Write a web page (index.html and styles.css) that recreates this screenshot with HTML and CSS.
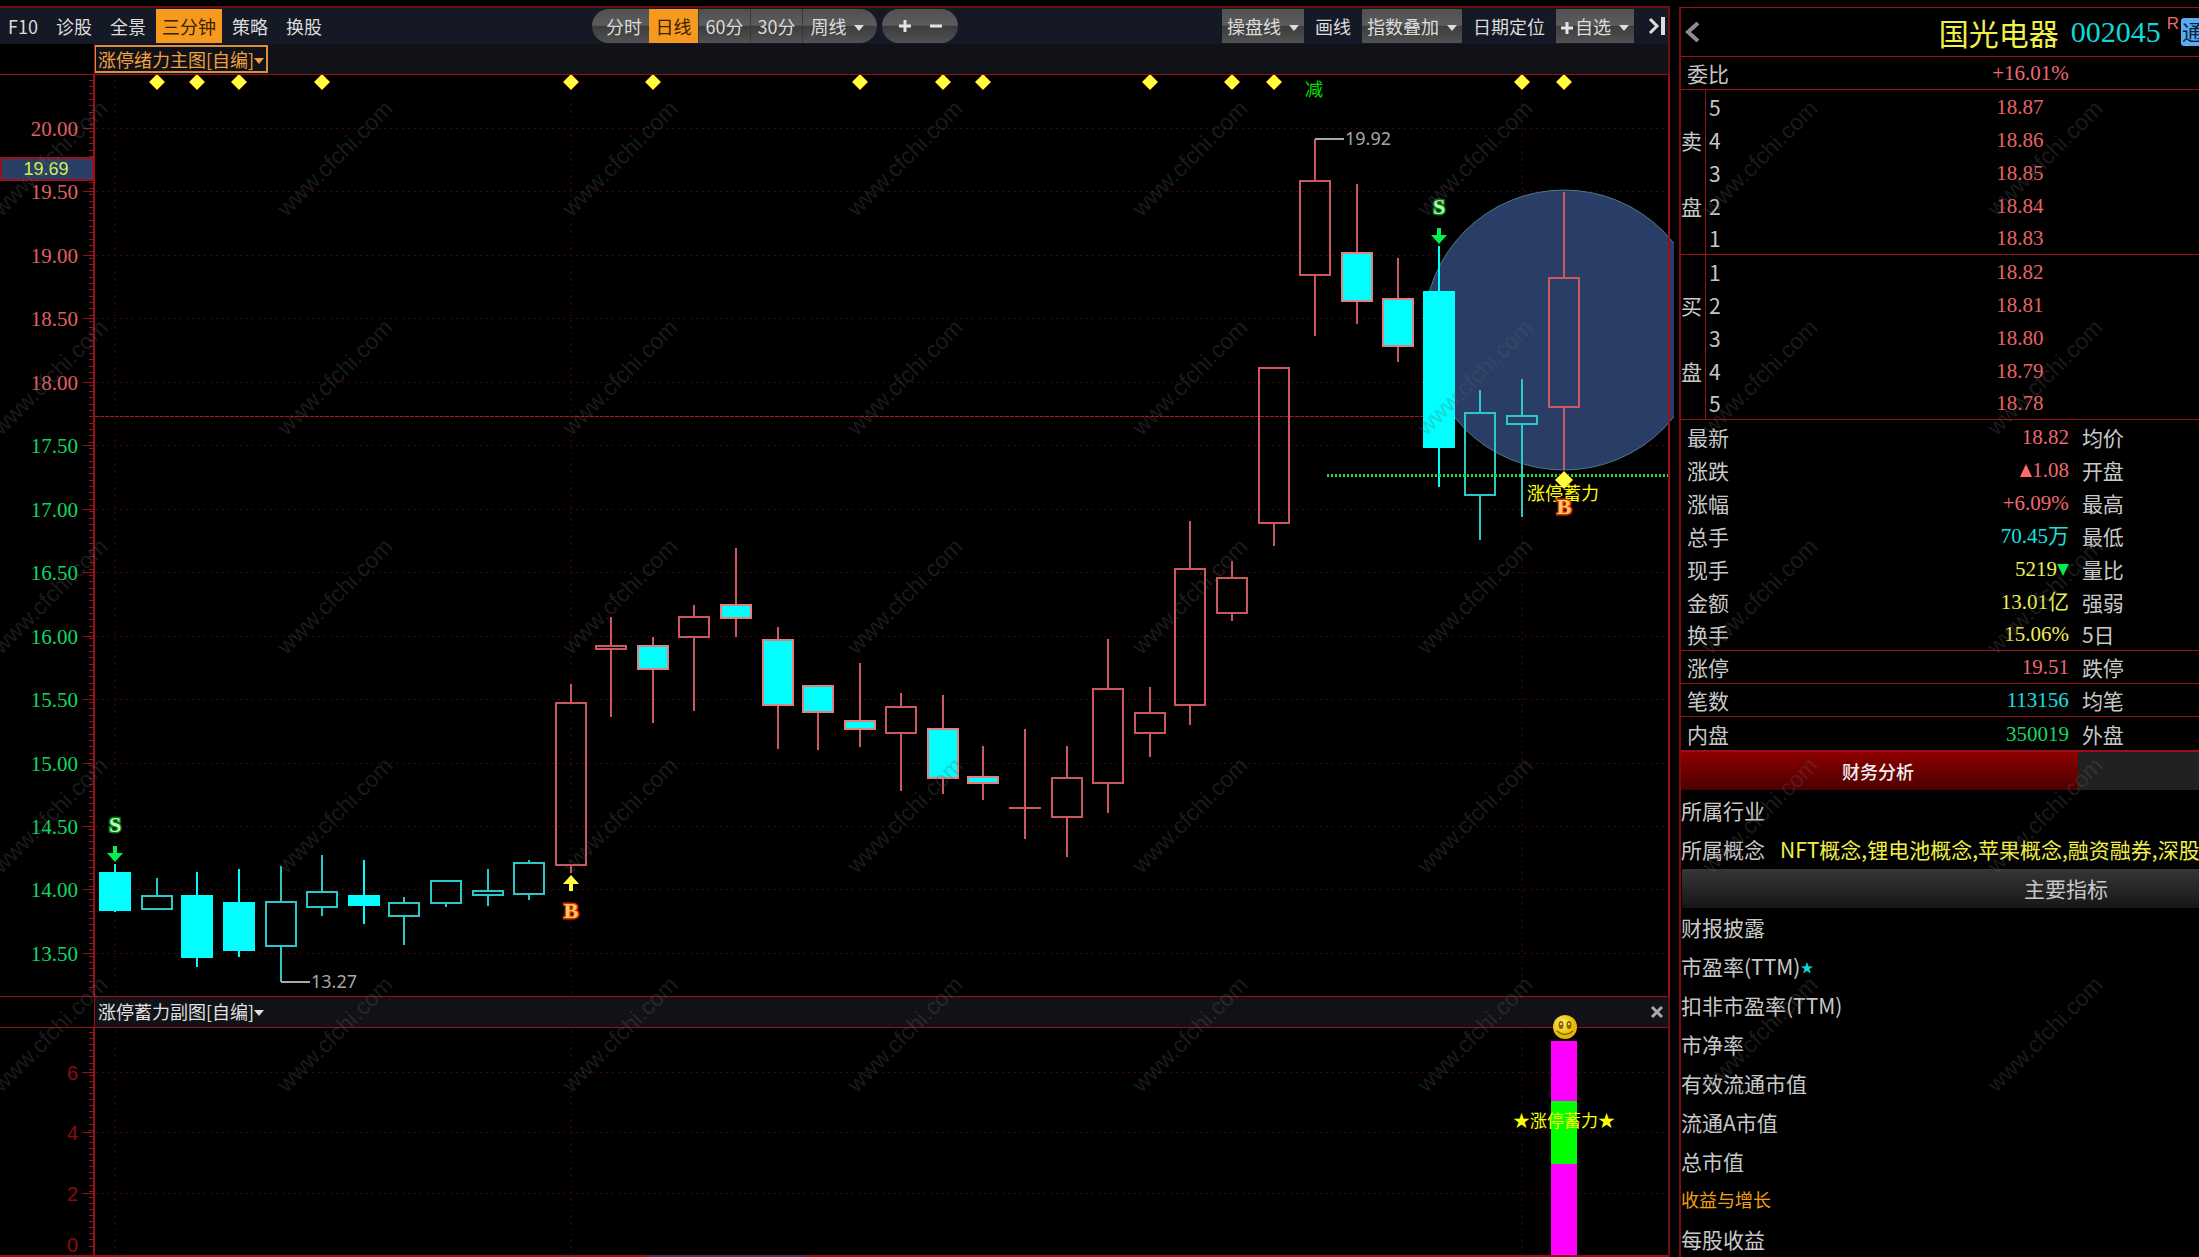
FILE: index.html
```html
<!DOCTYPE html>
<html lang="zh-CN">
<head>
<meta charset="utf-8">
<title>国光电器 002045</title>
<link rel="stylesheet" href="styles.css">
</head>
<body>
<div class="shell">
  <main class="chart">
    <div class="toolbar">
      <div class="tools tools-left">
        <button class="tool">F10</button>
        <button class="tool">诊股</button>
        <button class="tool">全景</button>
        <button class="tool tool-on">三分钟</button>
        <button class="tool">策略</button>
        <button class="tool">换股</button>
      </div>
      <div class="periods">
        <button class="period period-first">分时</button>
        <button class="period period-on">日线</button>
        <button class="period">60分</button>
        <button class="period">30分</button>
        <button class="period period-last">周线<i class="caret"></i></button>
      </div>
      <div class="scale">
        <button class="step" aria-label="放大"><svg width="12" height="12"><path d="M6 0V12M0 6H12" stroke="#e4e4e4" stroke-width="3"/></svg></button>
        <button class="step" aria-label="缩小"><svg width="12" height="12"><path d="M0 6H12" stroke="#e4e4e4" stroke-width="3"/></svg></button>
      </div>
      <div class="tools tools-right">
        <button class="drop">操盘线<i class="caret"></i></button>
        <button class="plain">画线</button>
        <button class="drop">指数叠加<i class="caret"></i></button>
        <button class="plain">日期定位</button>
        <button class="drop"><svg class="plus" width="12" height="12"><path d="M6 0V12M0 6H12" stroke="#e4e4e4" stroke-width="3"/></svg>自选<i class="caret"></i></button>
        <button class="collapse" aria-label="收起"><svg width="18" height="20"><path d="M2 3L9 10L2 17" fill="none" stroke="#ddd" stroke-width="3"/><path d="M15 1V19" stroke="#ddd" stroke-width="4"/></svg></button>
      </div>
    </div>
    <div class="indicator">
      <button class="indicator-name indicator-on">涨停绪力主图[自编]<i class="caret"></i></button>
    </div>
    <svg class="plot plot-main" id="main" viewBox="0 75 1668 921"></svg>
    <div class="indicator indicator-sub">
      <button class="indicator-name">涨停蓄力副图[自编]<i class="caret"></i></button>
      <button class="close" aria-label="关闭"><svg width="14" height="14"><path d="M2 2L12 12M12 2L2 12" stroke="#a8a8a8" stroke-width="3"/></svg></button>
    </div>
    <svg class="plot plot-sub" id="sub" viewBox="0 1028 1668 229"></svg>
  </main>

  <aside class="quote">
    <header class="stock">
      <button class="back" aria-label="返回"><svg width="16" height="20"><path d="M14 1L4 10L14 19" fill="none" stroke="#8c8c8c" stroke-width="4"/></svg></button>
      <h1 class="name">国光电器</h1>
      <span class="code">002045</span>
      <sup class="margin-flag">R</sup>
      <span class="connect">通</span>
    </header>
    <table class="stats">
      <tr class="ruled"><th>委比</th><td class="up">+16.01%</td><th></th></tr>
    </table>
    <table class="book">
      <tr><th></th><th class="level">5</th><td>18.87</td><td></td></tr>
      <tr><th>卖</th><th class="level">4</th><td>18.86</td><td></td></tr>
      <tr><th></th><th class="level">3</th><td>18.85</td><td></td></tr>
      <tr><th>盘</th><th class="level">2</th><td>18.84</td><td></td></tr>
      <tr class="ruled"><th></th><th class="level">1</th><td>18.83</td><td></td></tr>
      <tr><th></th><th class="level">1</th><td>18.82</td><td></td></tr>
      <tr><th>买</th><th class="level">2</th><td>18.81</td><td></td></tr>
      <tr><th></th><th class="level">3</th><td>18.80</td><td></td></tr>
      <tr><th>盘</th><th class="level">4</th><td>18.79</td><td></td></tr>
      <tr class="ruled"><th></th><th class="level">5</th><td>18.78</td><td></td></tr>
    </table>
    <table class="stats">
      <tr><th>最新</th><td class="up">18.82</td><th>均价</th></tr>
      <tr><th>涨跌</th><td class="up"><svg width="12" height="13"><path d="M6 0L12 13H0Z" fill="#ff6b6b"/></svg>1.08</td><th>开盘</th></tr>
      <tr><th>涨幅</th><td class="up">+6.09%</td><th>最高</th></tr>
      <tr><th>总手</th><td class="volume">70.45万</td><th>最低</th></tr>
      <tr><th>现手</th><td class="amount">5219<svg width="12" height="13"><path d="M6 13L12 1H0Z" fill="#00f050"/></svg></td><th>量比</th></tr>
      <tr><th>金额</th><td class="amount">13.01亿</td><th>强弱</th></tr>
      <tr class="ruled"><th>换手</th><td class="amount">15.06%</td><th>5日</th></tr>
      <tr class="ruled"><th>涨停</th><td class="up">19.51</td><th>跌停</th></tr>
      <tr class="ruled"><th>笔数</th><td class="volume">113156</td><th>均笔</th></tr>
      <tr><th>内盘</th><td class="down">350019</td><th>外盘</th></tr>
    </table>
    <div class="tabs">
      <button class="tab">财务分析</button>
      <span class="tab-rest"></span>
    </div>
    <div class="facts">
      <p>所属行业</p>
      <p>所属概念<span class="concepts">NFT概念,锂电池概念,苹果概念,融资融券,深股通</span></p>
      <h2 class="facts-title">主要指标</h2>
      <p>财报披露</p>
      <p>市盈率(TTM)<span class="star">★</span></p>
      <p>扣非市盈率(TTM)</p>
      <p>市净率</p>
      <p>有效流通市值</p>
      <p>流通A市值</p>
      <p>总市值</p>
      <h3 class="growth">收益与增长</h3>
      <p>每股收益</p>
    </div>
  </aside>
  <div class="watermark" id="watermark" aria-hidden="true"></div>
</div>
<script src="chart.js"></script>
</body>
</html>
```
FILE: styles.css
```css
* { box-sizing: border-box; }

body {
  margin: 0;
  background: #000;
  color: #c8c8c8;
  font-family: "Noto Sans CJK SC", sans-serif;
  font-size: 18px;
}

button {
  margin: 0;
  padding: 0;
  border: 0;
  background: none;
  color: inherit;
  font: inherit;
  line-height: 32px;
  white-space: nowrap;
}

.shell {
  position: relative;
  display: grid;
  grid-template-columns: minmax(0, 1670fr) minmax(0, 520fr);
  column-gap: 9px;
  height: 100vh;
  padding-top: 6px;
  overflow: hidden;
}

.chart {
  position: relative;
  z-index: 1;
  border-top: 2px solid #6e0f14;
  border-right: 2px solid #6e0f14;
}

/* toolbar */
.toolbar {
  display: flex;
  height: 36px;
  padding-top: 1px;
  background: #151825;
  color: #dcdcdc;
}
.tools, .periods, .scale { display: flex; height: 34px; }
.tools-left { flex: 592 1 0; gap: 2px; }
.tools-right { flex: 708 1 0; justify-content: flex-end; padding-right: 2px; }
.tool { padding: 0 8px; }
.tool-on { padding: 0 6px; background: #f59a1e; color: #3a2200; }

.periods, .scale, .drop {
  background: linear-gradient(#505050, #5c5c5c 48%, #3c3c3c 50%, #525252);
}
.periods { margin-right: 5px; border-radius: 17px; overflow: hidden; }
.period { width: 52px; border-left: 1px solid #383838; }
.period-first { width: 57px; padding-left: 7px; border: 0; }
.period-on { width: 49px; border: 0; background: #f59a1e; color: #3a2200; }
.period-last { width: 75px; padding-right: 6px; }
.scale { align-items: center; justify-content: center; gap: 19px; width: 76px; border-radius: 17px; }
.step { display: flex; }

.caret {
  display: inline-block;
  margin-left: 7px;
  border: 5px solid transparent;
  border-top: 6px solid currentColor;
  border-bottom: 0;
  vertical-align: 3px;
}
.drop { padding: 0 5px; }
.drop .caret { margin-left: 8px; }
.plus { margin-right: 2px; }
.plain { padding: 0 11px; }
.collapse { display: flex; align-items: center; padding-left: 14px; }

/* indicator title bars */
.indicator {
  position: relative;
  display: flex;
  justify-content: space-between;
  height: 31px;
  margin-left: 94px;
  border-bottom: 1px solid #98101a;
  background: #111217;
}
.indicator::before {
  content: "";
  position: absolute;
  top: 0;
  bottom: -1px;
  left: -94px;
  width: 94px;
  border-bottom: 1px solid #98101a;
  border-right: 1px solid #98101a;
}
.indicator-name { height: 28px; padding: 0 4px; line-height: 26px; }
.indicator-name .caret { margin-left: 0; }
.indicator-on { margin-top: 1px; padding: 0 2px; border: 2px solid #d98f3c; color: #f0a040; line-height: 22px; }
.indicator-sub { height: 32px; border-top: 1px solid #98101a; color: #e0e0e0; }
.indicator-sub::before { top: -1px; border-top: 1px solid #98101a; }
.close { display: flex; align-items: center; padding-right: 4px; }

/* plots */
.plot { display: block; width: 100%; height: auto; overflow: visible; }
.plot-sub { position: relative; }
.grid { stroke: #4a0508; stroke-dasharray: 2 4; }
.axis { stroke: #98101a; stroke-width: 2; }
.tick { stroke: #98101a; }
.price { font: 21px "Liberation Serif", serif; text-anchor: end; }
.price-up { fill: #e06060; }
.price-down { fill: #10d860; }
.count { font: 20px "Liberation Sans", sans-serif; text-anchor: end; fill: #8c0c10; }
.cursor { fill: #2a3f66; stroke: #98101a; stroke-width: 2; }
.cursor-price { font: 18px "Liberation Sans", sans-serif; text-anchor: middle; fill: #d8f050; }
.halo { fill: #2a3d66; stroke: #4a7c88; }
.last { stroke: #b0141c; stroke-dasharray: 4 1; }
.support { stroke: #20d838; stroke-width: 3; stroke-dasharray: 2 2; }
.red { stroke: #cc5860; fill: none; stroke-width: 2; }
.mixed { stroke: #e08080; fill: #0ff; stroke-width: 2; }
.mixed-wick { stroke: #cc5860; stroke-width: 2; }
.cyan { stroke: #2cc8c8; fill: none; stroke-width: 2; }
.solid { stroke: #0ff; fill: #0ff; stroke-width: 2; }
.diamond { fill: #ffff40; stroke: #a86000; stroke-width: 1; }
.note { font: 18px "Noto Sans", sans-serif; fill: #a8a8a8; }
.leader { stroke: #a8a8a8; stroke-width: 2; }
.mark { font: 18px "Noto Sans CJK SC", sans-serif; fill: #ffff00; text-anchor: middle; }
.mark-sub { font-size: 17px; }
.mark-cut { fill: #00e000; }
.signal { font: bold 22px "Liberation Serif", serif; text-anchor: middle; paint-order: stroke; stroke-width: 3; }
.sell { fill: #b8ffb0; stroke: #087820; }
.buy { fill: #ffc860; stroke: #d03000; }
.sell-arrow { fill: #00f050; }
.buy-arrow { fill: #ffff40; }

/* quote panel */
.quote {
  min-width: 0;
  margin-top: 1px;
  border-top: 1px solid #98101a;
  border-left: 2px solid #7c0c12;
  overflow: hidden;
  font-size: 21px;
}
.stock {
  display: flex;
  align-items: center;
  height: 49px;
  border-bottom: 1px solid #98101a;
}
.back { display: flex; margin-right: auto; padding-left: 3px; }
.name { margin: 0 12px 0 0; color: #f0f048; font-size: 30px; font-weight: 400; line-height: 46px; }
.code { color: #10d8d8; font-family: "Liberation Serif", serif; font-size: 30px; line-height: 46px; }
.margin-flag { align-self: flex-start; margin: 6px 2px 0 6px; color: #f06868; font: 17px/20px "Liberation Sans", sans-serif; }
.connect {
  width: 18px;
  height: 28px;
  padding-left: 1px;
  border-radius: 3px 0 0 3px;
  background: #58acf4;
  color: #08203c;
  line-height: 27px;
  overflow: hidden;
}

table { width: 100%; border-spacing: 0; table-layout: fixed; }
th { padding: 0; font-weight: 400; text-align: left; line-height: 30px; }
td { padding: 0; font-family: "Liberation Serif", "Noto Sans CJK SC", serif; text-align: right; line-height: 30px; }
tr { height: 33px; }
.ruled > * { border-bottom: 1px solid #98101a; }
.stats th { width: 23%; padding-left: 2px; }
.stats td { padding-right: 11px; }
.stats th:first-child { width: 24%; padding-left: 6px; }
.book th { width: 24px; }
.book .level { width: 40px; padding-left: 3px; border-left: 1px solid #98101a; }
.book td { color: #e86464; }
.book td:last-child { width: 30%; }
.up { color: #f06870; }
.down { color: #18d860; }
.volume { color: #18e0e0; }
.amount { color: #f0f050; }

.tabs { display: flex; height: 40px; border-top: 2px solid #98101a; }
.tab { flex: 397 1 0; padding-right: 3px; background: linear-gradient(#8e0000, #4c0000); color: #f0f0f0; font-weight: 500; line-height: 36px; font-size: 18px; }
.tab-rest { flex: 122 1 0; background: #212121; }

.facts { padding-top: 1px; }
.facts p { margin: 0; height: 39px; line-height: 39px; white-space: nowrap; }
.concepts { margin-left: 15px; color: #f0f048; }
.facts-title {
  height: 39px;
  margin: 0 0 0 1px;
  padding-right: 91px;
  background: linear-gradient(#363636, #161616);
  font-size: 21px;
  font-weight: 400;
  line-height: 39px;
  text-align: right;
}
.star { color: #10d8d8; font-size: 13px; vertical-align: 3px; line-height: 13px; }
.growth { height: 39px; margin: 0; color: #f0a010; font-size: 18px; font-weight: 400; line-height: 36px; }

/* watermark laid over the whole window */
.watermark {
  position: absolute;
  top: 49px;
  left: -92px;
  z-index: 2;
  display: grid;
  grid-template-columns: repeat(8, 285px);
  grid-auto-rows: 219px;
  place-items: center;
  color: rgba(95, 95, 95, 0.3);
  font: 23px "Liberation Sans", sans-serif;
  pointer-events: none;
}
.watermark span { transform: rotate(-45deg); }
```
FILE: chart.js
```js
// centre x, high, body top, body bottom, low, style
const candles = [
  [115, 864, 873, 910, 912, 'solid'], [157, 878, 896, 909, 909, 'cyan'],
  [197, 872, 896, 957, 967, 'solid'], [239, 869, 903, 950, 957, 'solid'],
  [281, 866, 902, 946, 982, 'cyan'], [322, 855, 892, 907, 916, 'cyan'],
  [364, 860, 896, 905, 924, 'solid'], [404, 897, 903, 916, 945, 'cyan'],
  [446, 881, 881, 903, 907, 'cyan'], [488, 869, 891, 895, 906, 'cyan'],
  [529, 860, 863, 894, 900, 'cyan'], [571, 684, 703, 865, 873, 'red'],
  [611, 617, 646, 649, 717, 'red'], [653, 637, 646, 669, 723, 'mixed'],
  [694, 605, 617, 637, 711, 'red'], [736, 548, 605, 618, 637, 'mixed'],
  [778, 627, 640, 705, 749, 'mixed'], [818, 686, 686, 712, 750, 'mixed'],
  [860, 663, 721, 729, 747, 'mixed'], [901, 693, 707, 733, 791, 'red'],
  [943, 695, 729, 778, 794, 'mixed'], [983, 746, 777, 783, 800, 'mixed'],
  [1025, 729, 808, 808, 839, 'red'], [1067, 746, 778, 817, 857, 'red'],
  [1108, 639, 689, 783, 813, 'red'], [1150, 687, 713, 733, 757, 'red'],
  [1190, 521, 569, 705, 725, 'red'], [1232, 561, 578, 613, 621, 'red'],
  [1274, 368, 368, 523, 546, 'red'], [1315, 139, 181, 275, 336, 'red'],
  [1357, 184, 253, 301, 324, 'mixed'], [1398, 258, 299, 346, 362, 'mixed'],
  [1439, 246, 292, 447, 487, 'solid'], [1480, 390, 413, 495, 540, 'cyan'],
  [1522, 379, 416, 424, 517, 'cyan'], [1564, 192, 278, 407, 470, 'red'],
];
const flagged = [157, 197, 239, 322, 571, 653, 860, 943, 983, 1150, 1232, 1274, 1522, 1564];

const line = (cls, x1, y1, x2, y2) =>
  `<line class="${cls}" x1="${x1}" y1="${y1}" x2="${x2}" y2="${y2}"/>`;
const text = (cls, x, y, s) => `<text class="${cls}" x="${x}" y="${y}">${s}</text>`;
const diamond = (x, y, r) =>
  `<path class="diamond" d="M${x} ${y - r}L${x + r} ${y}L${x} ${y + r}L${x - r} ${y}Z"/>`;
const priceY = p => Math.round(128 + (20 - p) * 126.9) + 0.5;

function drawMain() {
  let s = '';
  for (let i = 0; i < 145; i++) {
    const y = Math.round(128 - 48 + i * 6.345) + 0.5;
    if (y < 994) s += line('tick', 89, y, 94, y);
  }
  for (let p = 20; p >= 13.5; p -= 0.5) {
    const y = priceY(p);
    s += line('grid', 96, y, 1668, y) + line('tick', 83, y, 94, y);
    s += text('price ' + (p > 17.5 ? 'price-up' : 'price-down'), 78, y + 7, p.toFixed(2));
  }
  for (const x of [115, 571, 1522]) s += line('grid', x, 80, x, 996);
  s += line('axis', 94, 75, 94, 996);
  s += '<rect class="cursor" x="1" y="158" width="92" height="22"/>' + text('cursor-price', 46, 175, '19.69');
  s += '<clipPath id="edge"><rect x="1400" y="150" width="274" height="350"/></clipPath>';
  s += line('last', 95, 416.5, 1424, 416.5);
  s += '<circle class="halo" cx="1564" cy="330" r="140" clip-path="url(#edge)"/>';
  s += line('axis', 1669, 75, 1669, 996);
  for (const [x, hi, top, bot, lo, kind] of candles) {
    const wick = kind === 'mixed' ? 'mixed-wick' : kind;
    if (hi < top) s += line(wick, x, hi, x, top);
    if (bot < lo) s += line(wick, x, bot, x, lo);
    s += top === bot ? line(kind, x - 16, top, x + 16, top)
      : `<rect class="${kind}" x="${x - 15}" y="${top}" width="30" height="${bot - top}"/>`;
  }
  s += line('support', 1327, 475.5, 1668, 475.5);
  for (const x of flagged) s += diamond(x, 82, 8);
  s += text('mark mark-cut', 1314, 96, '减');
  s += line('leader', 1315, 139, 1344, 139) + text('note', 1345, 145, '19.92');
  s += line('leader', 281, 982, 310, 982) + text('note', 311, 988, '13.27');
  for (const [x, y] of [[115, 846], [1439, 228]]) {
    s += text('signal sell', x, y - 14, 'S');
    s += `<path class="sell-arrow" d="M${x - 2} ${y}h4v7h6l-8 9l-8 -9h6Z"/>`;
  }
  s += '<path class="buy-arrow" d="M571 875l8 9h-6v7h-4v-7h-6Z"/>' + text('signal buy', 571, 918, 'B');
  s += diamond(1564, 480, 9) + text('mark', 1563, 500, '涨停蓄力') + text('signal buy', 1564, 514, 'B');
  document.getElementById('main').innerHTML = s;
}

function drawSub() {
  let s = '';
  for (let i = 0; i < 37; i++) {
    const y = Math.round(1032 + i * 6.1) + 0.5;
    if (y < 1252) s += line('tick', 89, y, 94, y);
  }
  for (const [n, y] of [[6, 1072.5], [4, 1132.5], [2, 1193.5]]) {
    s += line('grid', 96, y, 1668, y) + line('tick', 82, y, 94, y) + text('count', 78, y + 7, n);
  }
  s += text('count', 78, 1252, '0');
  for (const x of [115, 571, 1522]) s += line('grid', x, 1030, x, 1255);
  s += line('axis', 94, 1028, 94, 1255) + line('axis', 0, 1256, 1668, 1256);
  s += '<rect x="648" y="1255" width="157" height="2" fill="#5c2850"/>';
  s += '<rect x="1551" y="1041" width="26" height="214" fill="#f0f"/>';
  s += '<rect x="1551" y="1101" width="26" height="63" fill="#0f0"/>';
  s += text('mark mark-sub', 1564, 1127, '★涨停蓄力★');
  s += '<defs><radialGradient id="face" cx=".4" cy=".35"><stop offset="0" stop-color="#fff26a"/><stop offset="1" stop-color="#e8b800"/></radialGradient></defs>';
  s += '<circle cx="1565" cy="1027" r="12" fill="url(#face)"/>';
  s += '<ellipse cx="1561" cy="1025" rx="2.5" ry="4" fill="#8a6400"/><ellipse cx="1569" cy="1025" rx="2.5" ry="4" fill="#8a6400"/>';
  s += '<circle cx="1561" cy="1024" r="1" fill="#fff8c0"/><circle cx="1569" cy="1024" r="1" fill="#fff8c0"/>';
  s += '<path d="M1557 1031q8 7 16 0" fill="none" stroke="#8a6400" stroke-width="1.5"/>';
  document.getElementById('sub').innerHTML = s;
}

document.getElementById('watermark').innerHTML = '<span>www.cfchi.com</span>'.repeat(40);
drawMain();
drawSub();
```
